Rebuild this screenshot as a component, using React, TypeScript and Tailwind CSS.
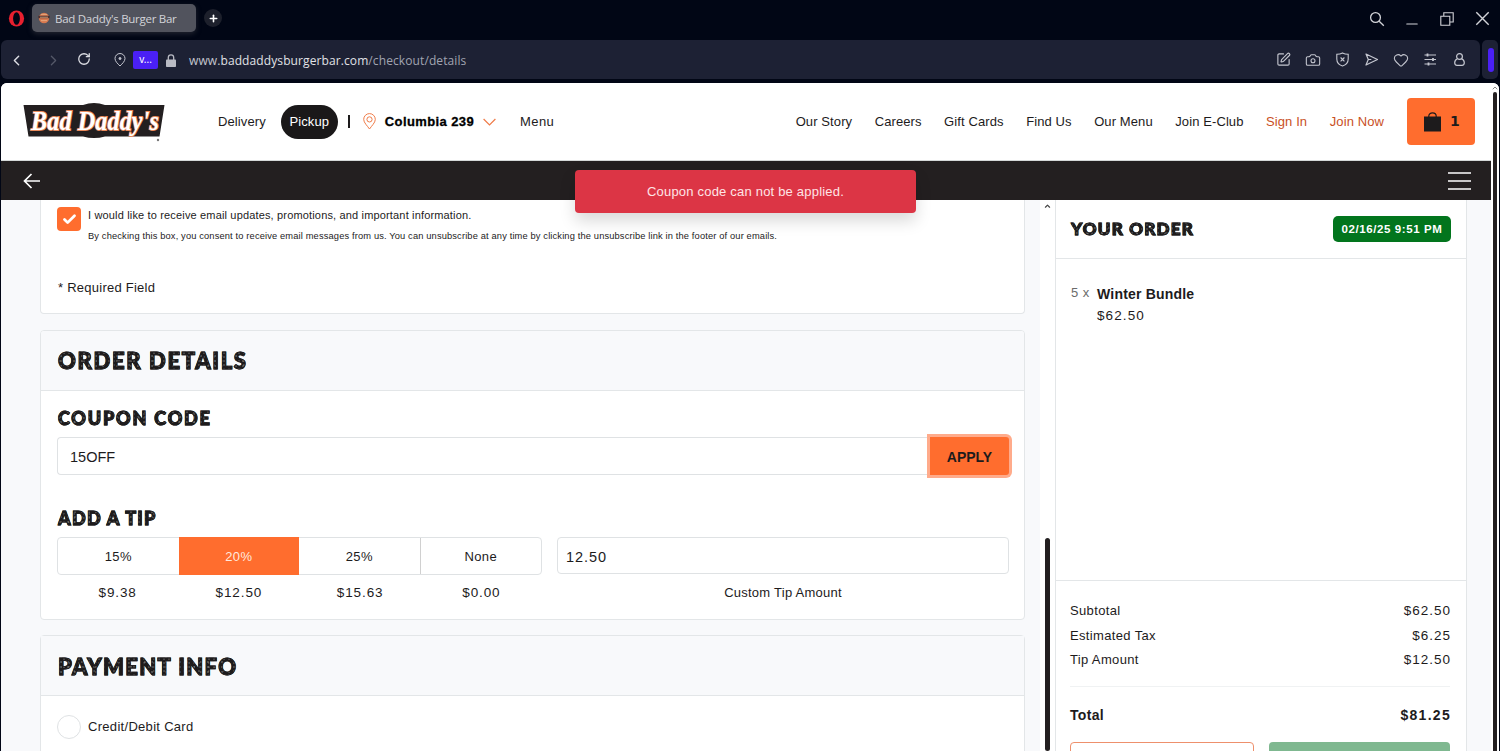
import { useState } from 'react'
import type { ReactNode } from 'react'
import { Camera, Check, ChevronLeft, ChevronRight, ChevronUp, Heart, Minus, Plus, RotateCw, SquarePen } from 'lucide-react'

interface NavItem {
  label: string
  accent?: boolean
}

interface TipOption {
  label: string
  amount: string
}

const NAV: NavItem[] = [
  { label: 'Our Story' },
  { label: 'Careers' },
  { label: 'Gift Cards' },
  { label: 'Find Us' },
  { label: 'Our Menu' },
  { label: 'Join E-Club' },
  { label: 'Sign In', accent: true },
  { label: 'Join Now', accent: true },
]

const TIPS: TipOption[] = [
  { label: '15%', amount: '$9.38' },
  { label: '20%', amount: '$12.50' },
  { label: '25%', amount: '$15.63' },
  { label: 'None', amount: '$0.00' },
]

const TOTALS = [
  ['Subtotal', '$62.50'],
  ['Estimated Tax', '$6.25'],
  ['Tip Amount', '$12.50'],
]

// rough "printed" heading: heavy letters with light specks
function Stamp({ children, className }: { children: ReactNode; className: string }) {
  return (
    <h2 className={`ml-[1px] font-['Lato',sans-serif] font-black whitespace-nowrap text-transparent [-webkit-text-stroke:0.9px_#1d1b1c] bg-clip-text bg-[#1d1b1c] bg-[radial-gradient(circle_at_1px_1px,#a9a9a9_0.5px,transparent_0.8px),radial-gradient(circle_at_3px_2px,#8b8b8b_0.5px,transparent_0.9px)] bg-size-[5px_4px,7px_5px] ${className}`}>
      {children}
    </h2>
  )
}

function TabBar() {
  return (
    <div className="h-[40px] shrink-0 flex items-start pl-[8px] text-[#d3d4d9]">
      <svg className="w-[17px] h-[17px] mt-[10px]" viewBox="0 0 17 17">
        <ellipse cx="8.5" cy="8.5" rx="7.6" ry="8" fill="#e8202f" />
        <ellipse cx="8.5" cy="8.5" rx="3.4" ry="6.3" fill="#010615" />
      </svg>
      <div className="ml-[7px] mt-[4px] w-[164px] h-[28px] rounded-[5px] bg-[#51535d] flex items-center pl-[6px] shadow-[0_2px_5px_#20232f]">
        <svg className="w-[12px] h-[12px]" viewBox="0 0 12 12">
          <circle cx="6" cy="6" r="5.2" fill="#d7794f" />
          <path d="M0.3 3.8h11.4v2.4H0.3z" fill="#4e3130" />
          <path d="M2 5.2h8M3 8.6h6M3 2.4h6" stroke="#e9b187" strokeWidth="0.8" />
        </svg>
        <span className="ml-[5px] pt-[1px] font-['Open_Sans',sans-serif] text-[11.5px] tracking-[-0.27px] whitespace-nowrap">Bad Daddy's Burger Bar</span>
      </div>
      <div className="ml-[8px] mt-[9px] w-[18px] h-[18px] rounded-full bg-[#1d202c] flex items-center justify-center text-white">
        <Plus size={11} strokeWidth={3.5} />
      </div>
      <div className="ml-auto flex items-center h-[37px] pr-[10px]">
        <svg className="w-[16px] h-[16px] mr-[18px]" viewBox="0 0 16 16" fill="none" stroke="currentColor" strokeWidth="1.3">
          <circle cx="6.5" cy="6.5" r="4.9" />
          <path d="M10.2 10.2l4.600 4.600" />
        </svg>
        <Minus size={18} strokeWidth={1.4} className="mr-[19px] mt-[11px]" />
        <svg className="w-[14px] h-[14px] mr-[21px]" viewBox="0 0 14 14" fill="none" stroke="currentColor" strokeWidth="1.1">
          <path d="M0.8 4.2h9v9h-9zM3.8 4V0.8h9.4v9.2H10" />
        </svg>
        <svg className="w-[15px] h-[15px]" viewBox="0 0 15 15" fill="none" stroke="currentColor" strokeWidth="1.4">
          <path d="M1.3 1.3l12.4 12.4M13.7 1.3L1.3 13.7" />
        </svg>
      </div>
    </div>
  )
}

function AddressBar() {
  return (
    <div className="h-[39px] shrink-0 flex gap-[2px] pl-[1px]">
      <div className="w-[1479px] rounded-[6px] bg-[#1d2134] flex items-center text-[#c5c7d0]">
        <ChevronLeft size={17} strokeWidth={2} className="ml-[7px] mt-[1px] text-[#dcdde3]" />
        <ChevronRight size={17} strokeWidth={1.8} className="ml-[20px] mt-[1px] text-[#555969]" />
        <RotateCw size={14} strokeWidth={2.2} className="ml-[15px] -mt-[1px] text-[#dcdde3]" />
        <svg className="w-[12px] h-[14px] ml-[23px] mt-[1px]" viewBox="0 0 12 14" fill="none" stroke="currentColor" strokeWidth="1">
          <path d="M6 13C3.6 10.600 1 8.200 1 5.500a5 5 0 0 1 10 0C11 8.200 8.400 10.600 6 13z" />
          <circle cx="6" cy="5.500" r="1" fill="currentColor" />
        </svg>
        <span className="ml-[7px] w-[25px] h-[18px] rounded-[2px] bg-[#4a20f5] text-white text-[10px] leading-[17px] text-center">v...</span>
        <svg className="w-[10px] h-[13px] ml-[8px] mt-[1px]" viewBox="0 0 10 13">
          <path d="M2.300 6V3.500a2.700 2.700 0 0 1 5.400 0V6" fill="none" stroke="#b9bbc4" strokeWidth="1.300" />
          <rect x="0" y="5.500" width="10" height="7.500" rx="0.800" fill="#b9bbc4" />
        </svg>
        <span className="ml-[13px] pt-[2px] font-['Open_Sans',sans-serif] text-[12px] tracking-[0.100px] whitespace-nowrap text-[#a1a4b1]">
          <span className="text-[#c3c5ce]">www.</span><span className="text-[#e0e1e6]">baddaddysburgerbar.com</span>/checkout/details
        </span>
        <div className="ml-auto mr-[13px] flex items-center gap-[14.3px]">
          <SquarePen size={15} strokeWidth={1.800} />
          <Camera size={16} strokeWidth={1.600} className="-mx-[0.5px]" />
          <svg className="w-[15px] h-[15px]" viewBox="0 0 15 15" fill="none" stroke="currentColor" strokeWidth="1.100">
            <path d="M7.500 1C9.300 2 11.200 2.300 13.200 2.300V7c0 3.500-2.500 6-5.700 7C4.300 13 1.800 10.500 1.800 7V2.300C3.800 2.300 5.700 2 7.500 1z" />
            <path d="M5.600 5.500l3.800 3.800M9.400 5.500L5.600 9.300" />
          </svg>
          <svg className="w-[15px] h-[15px]" viewBox="0 0 15 15" fill="none" stroke="currentColor" strokeWidth="1.200" strokeLinejoin="round">
            <path d="M2 2l11.500 5.500L2 13l2.300-5.500zM4.300 7.500h3" />
          </svg>
          <Heart size={16} strokeWidth={1.600} className="-mx-[0.5px]" />
          <svg className="w-[15px] h-[15px]" viewBox="0 0 15 15" fill="none" stroke="currentColor">
            <path d="M1.500 3h11.500M1.500 7.500h11.500M1.500 12h11.500" strokeWidth="1.200" />
            <path d="M4.500 1.500v3M10 6v3M5.500 10.500v3" strokeWidth="1.800" />
          </svg>
          <svg className="w-[15px] h-[15px]" viewBox="0 0 15 15" fill="none" stroke="currentColor" strokeWidth="1.200">
            <circle cx="7.500" cy="4.500" r="2.900" />
            <path d="M5.400 6.800C3.600 7.600 2.700 9 2.700 10.800c0 1.800 1 2.500 2.300 2.500h5c1.300 0 2.300-.7 2.300-2.500 0-1.800-.9-3.200-2.700-4" />
          </svg>
        </div>
      </div>
      <div className="w-[16px] rounded-[5px] bg-[#1d2134] flex items-center justify-center pl-[2px]">
        <div className="w-[6px] h-[24px] rounded-[3px] bg-[#4a20f5]" />
      </div>
    </div>
  )
}

function Logo() {
  return (
    <svg className="w-[142px] h-[40px] overflow-visible" viewBox="0 0 142 40">
      <path d="M0.500 3H60Q71-1 82 3H141.500L136.500 34.500H82Q71 37.500 60 34.500H5.500z" fill="#231f20" />
      <g fontFamily="'Liberation Serif', serif" fontStyle="italic" fontWeight="700" fill="#fff" stroke="#e98a5c" strokeWidth="1.800" paintOrder="stroke">
        <text x="8" y="27.500" textLength="128" lengthAdjust="spacingAndGlyphs" fontSize="27">
          Bad Daddy's
        </text>
      </g>
      <circle cx="135" cy="38" r="1.200" fill="#777" />
    </svg>
  )
}

function SiteHeader() {
  return (
    <header className="h-[78px] shrink-0 bg-white border-b border-[#d5d8d8] flex items-center pl-[22px] pr-[16px] text-[13px] tracking-[0.1px] whitespace-nowrap text-[#1d1b1c]">
      <Logo />
      <span className="ml-[53px]">Delivery</span>
      <span className="ml-[15px] w-[57px] h-[34px] rounded-full bg-[#1a1819] text-white flex items-center justify-center">Pickup</span>
      <span className="ml-[10.500px] w-[2px] h-[13px] bg-[#1d1b1c]" />
      <svg className="w-[13px] h-[17px] ml-[12.500px]" viewBox="0 0 13 17" fill="none" stroke="#ef7b48" strokeWidth="1">
        <path d="M6.500 16C4.500 13 0.700 9.700 0.700 6.400a5.800 5.800 0 0 1 11.600 0C12.300 9.700 8.500 13 6.500 16z" />
        <circle cx="6.500" cy="6.400" r="2.600" />
      </svg>
      <span className="ml-[9px] font-bold tracking-[0.400px] text-black [-webkit-text-stroke:0.3px_black]">Columbia 239</span>
      <svg className="w-[13px] h-[8px] ml-[9px]" viewBox="0 0 13 8" fill="none" stroke="#ef7b48" strokeWidth="1.200">
        <path d="M0.600 1l5.900 6 5.900-6" />
      </svg>
      <span className="ml-[24px] tracking-[0.400px]">Menu</span>
      <nav className="ml-auto flex gap-[22.5px]">
        {NAV.map(n => (
          <a key={n.label} className={n.accent ? 'text-[#c9501e]' : ''}>{n.label}</a>
        ))}
      </nav>
      <button className="ml-[23px] w-[68px] h-[47px] rounded-[4px] bg-[#ff6d2e] flex items-center pl-[17px]">
        <svg className="w-[17px] h-[20px]" viewBox="0 0 17 20">
          <path d="M0 4.500h17V19.500H0z" fill="#1d1b1c" />
          <path d="M4.800 6V4a3.700 3.200 0 0 1 7.400 0v2" fill="none" stroke="#1d1b1c" strokeWidth="1.200" />
        </svg>
        <span className="ml-[9px] font-['DejaVu_Sans',sans-serif] font-bold text-[14px]">1</span>
      </button>
    </header>
  )
}

function EmailCard() {
  return (
    <section className="h-[114px] shrink-0 rounded-b-[4px] border border-t-0 border-[#e3e6e8] bg-white pl-[16px] pt-[7px]">
      <div className="flex">
        <div className="w-[24px] h-[24px] rounded-[4px] bg-[#ff6d2e] flex items-center justify-center text-white">
          <Check size={15} strokeWidth={4.500} />
        </div>
        <div className="ml-[7px] whitespace-nowrap">
          <p className="text-[11px] leading-[16px] tracking-[0.160px]">I would like to receive email updates, promotions, and important information.</p>
          <p className="mt-[6px] text-[9.300px] leading-[15px] tracking-[0.145px]">By checking this box, you consent to receive email messages from us. You can unsubscribe at any time by clicking the unsubscribe link in the footer of our emails.</p>
        </div>
      </div>
      <p className="mt-[34px] pl-[1px] text-[13px] leading-[20px] tracking-[0.250px]">* Required Field</p>
    </section>
  )
}

function OrderDetailsCard() {
  const [tip, setTip] = useState(1)
  return (
    <section className="mt-[16px] h-[290px] shrink-0 rounded-[4px] border border-[#e3e6e8] bg-white overflow-hidden">
      <div className="h-[60px] bg-[#f8f9fb] border-b border-[#e3e6e8] pl-[16px] flex items-center">
        <Stamp className="text-[22px] tracking-[1.680px]">ORDER DETAILS</Stamp>
      </div>
      <div className="pl-[16px] pr-[15px]">
        <Stamp className="mt-[14px] text-[18px] leading-[26px] tracking-[1.800px]">COUPON CODE</Stamp>
        <div className="mt-[6px] flex h-[38px] items-center">
          <input readOnly value="15OFF" className="h-[38px] flex-1 rounded-l-[4px] border border-r-0 border-[#dfe2e4] pl-[12px] pt-[2px] text-[14.500px] outline-none" />
          <button className="w-[79px] h-[38px] rounded-r-[3px] bg-[#ff6d2e] ring-[3px] ring-[#ffab8b] pt-[2px] font-bold text-[14px]">APPLY</button>
        </div>
        <Stamp className="mt-[30px] text-[18px] leading-[26px] tracking-[1.280px]">ADD A TIP</Stamp>
        <div className="mt-[6px] flex gap-[15px]">
          <div className="w-[485px]">
            <div className="flex h-[38px] rounded-[4px] border border-[#dfe2e4]">
              {TIPS.map((t, i) => (
                <button
                  key={t.label}
                  onClick={() => setTip(i)}
                  className={`flex-1 pt-[1px] text-[13px] tracking-[0.400px] ${i === 3 ? 'border-l border-[#d0d0d0]' : ''} ${
                    i === tip ? '-my-px bg-[#ff6d2e] text-[#ffe9df]' : ''
                  }`}
                >
                  {t.label}
                </button>
              ))}
            </div>
            <div className="mt-[8px] flex text-[13.500px] leading-[20px] tracking-[0.900px] text-center">
              {TIPS.map(t => <span key={t.label} className="flex-1">{t.amount}</span>)}
            </div>
          </div>
          <div className="flex-1 text-center">
            <input readOnly value="12.50" className="block w-full h-[37px] rounded-[4px] border border-[#dfe2e4] pl-[8px] pt-[2px] text-[14.500px] tracking-[0.950px] outline-none" />
            <p className="mt-[9px] text-[13px] leading-[20px] tracking-[0.250px]">Custom Tip Amount</p>
          </div>
        </div>
      </div>
    </section>
  )
}

function PaymentCard() {
  return (
    <section className="mt-[15px] h-[160px] shrink-0 rounded-t-[4px] border border-[#e3e6e8] bg-white">
      <div className="h-[60px] bg-[#f8f9fb] border-b border-[#e3e6e8] pl-[16px] pt-[1px] flex items-center">
        <Stamp className="text-[22px] tracking-[1.350px]">PAYMENT INFO</Stamp>
      </div>
      <div className="pt-[19px] pl-[16px] flex items-center">
        <span className="w-[24px] h-[24px] rounded-full border border-[#dfe2e4]" />
        <span className="ml-[7px] text-[13px] tracking-[0.300px]">Credit/Debit Card</span>
      </div>
    </section>
  )
}

function OrderSidebar() {
  return (
    <aside className="w-[412px] shrink-0 border-x border-[#e3e6e8] bg-white flex flex-col">
      <div className="h-[59px] shrink-0 border-b border-[#e3e6e8] pl-[14px] pr-[15px] flex items-center justify-between">
        <Stamp className="text-[17px] tracking-[1.250px]">YOUR ORDER</Stamp>
        <span className="w-[118px] h-[26px] rounded-[5px] bg-[#02751d] text-white font-bold text-[11.500px] tracking-[0.600px] flex items-center justify-center whitespace-nowrap pt-[1px]">02/16/25 9:51 PM</span>
      </div>
      <div className="h-[322px] shrink-0 border-b border-[#e3e6e8] pl-[15px] pt-[24px] flex">
        <span className="w-[26px] text-[13px] leading-[20px] tracking-[0.500px] text-[#6b6b6b]">5 x</span>
        <div>
          <p className="font-bold text-[14px] leading-[23px] tracking-[0.200px]">Winter Bundle</p>
          <p className="text-[13.500px] leading-[20px] tracking-[1.100px]">$62.50</p>
        </div>
      </div>
      <div className="pl-[14px] pr-[16px] pt-[18px]">
        {TOTALS.map(([label, value]) => (
          <div key={label} className="flex justify-between text-[13px] leading-[24.500px] tracking-[0.350px]">
            <span>{label}</span>
            <span className="-mr-[1px] text-[13.500px] tracking-[1.000px]">{value}</span>
          </div>
        ))}
        <div className="mt-[13px] border-t border-[#f0f2f3]" />
        <div className="mt-[16px] flex justify-between font-bold text-[14px] leading-[24px] tracking-[0.300px]">
          <span>Total</span>
          <span className="-mr-[1px] tracking-[1.300px]">$81.25</span>
        </div>
        <div className="mt-[15px] flex gap-[15px]">
          <span className="h-[38px] flex-1 rounded-[4px] border border-[#ee906c]" />
          <span className="h-[38px] flex-1 rounded-[4px] bg-[#7fb890]" />
        </div>
      </div>
    </aside>
  )
}

export default function App() {
  return (
    <div className="w-[1500px] h-[751px] overflow-hidden bg-[#010615] flex flex-col font-['Noto_Sans',sans-serif]">
      <TabBar />
      <AddressBar />
      <div className="relative mt-[4px] ml-[1px] w-[1498px] h-[668px] rounded-t-[6px] overflow-hidden bg-white flex font-['Liberation_Sans',sans-serif] text-[#1d1b1c]">
        <div className="w-[1490px] flex flex-col">
          <SiteHeader />
          <div className="h-[39px] shrink-0 bg-[#231f20] flex items-center justify-between pl-[22px] pr-[20px] text-white">
            <svg className="w-[18px] h-[16px]" viewBox="0 0 18 16" fill="none" stroke="currentColor" strokeWidth="1.700">
              <path d="M17 8H1.500M8.500 1L1.500 8l7 7" />
            </svg>
            <svg className="w-[23px] h-[18px]" viewBox="0 0 23 18" stroke="currentColor" strokeWidth="1.300">
              <path d="M0 1h23M0 9h23M0 17h23" />
            </svg>
          </div>
          <main className="h-[551px] shrink-0 flex bg-[#f8f9fb]">
            <div className="w-[1039px] shrink-0 pl-[39px] pr-[15px] flex flex-col overflow-hidden">
              <EmailCard />
              <OrderDetailsCard />
              <PaymentCard />
            </div>
            <div className="w-[15px] shrink-0 bg-white flex flex-col items-center">
              <ChevronUp size={9} strokeWidth={3.500} className="mt-[2px] text-[#444]" />
              <div className="mt-[328px] w-[5px] h-[230px] rounded-[3px] bg-[#231f20]" />
            </div>
            <OrderSidebar />
          </main>
        </div>
        <div className="w-[8px] flex flex-col items-center bg-white">
          <ChevronUp size={8} strokeWidth={3} className="mt-[1px] text-[#888]" />
          <div className="w-[4px] flex-1 rounded-t-[2px] bg-[#231f20]" />
        </div>
        {/* toast over the header */}
        <div className="absolute left-[574px] top-[87px] w-[341px] h-[43px] rounded-[4px] bg-[#dc3545] text-[#ffe4e6] text-[13px] tracking-[0.200px] flex items-center justify-center shadow-[0_8px_16px_rgba(0,0,0,0.15)]">
          Coupon code can not be applied.
        </div>
      </div>
    </div>
  )
}
